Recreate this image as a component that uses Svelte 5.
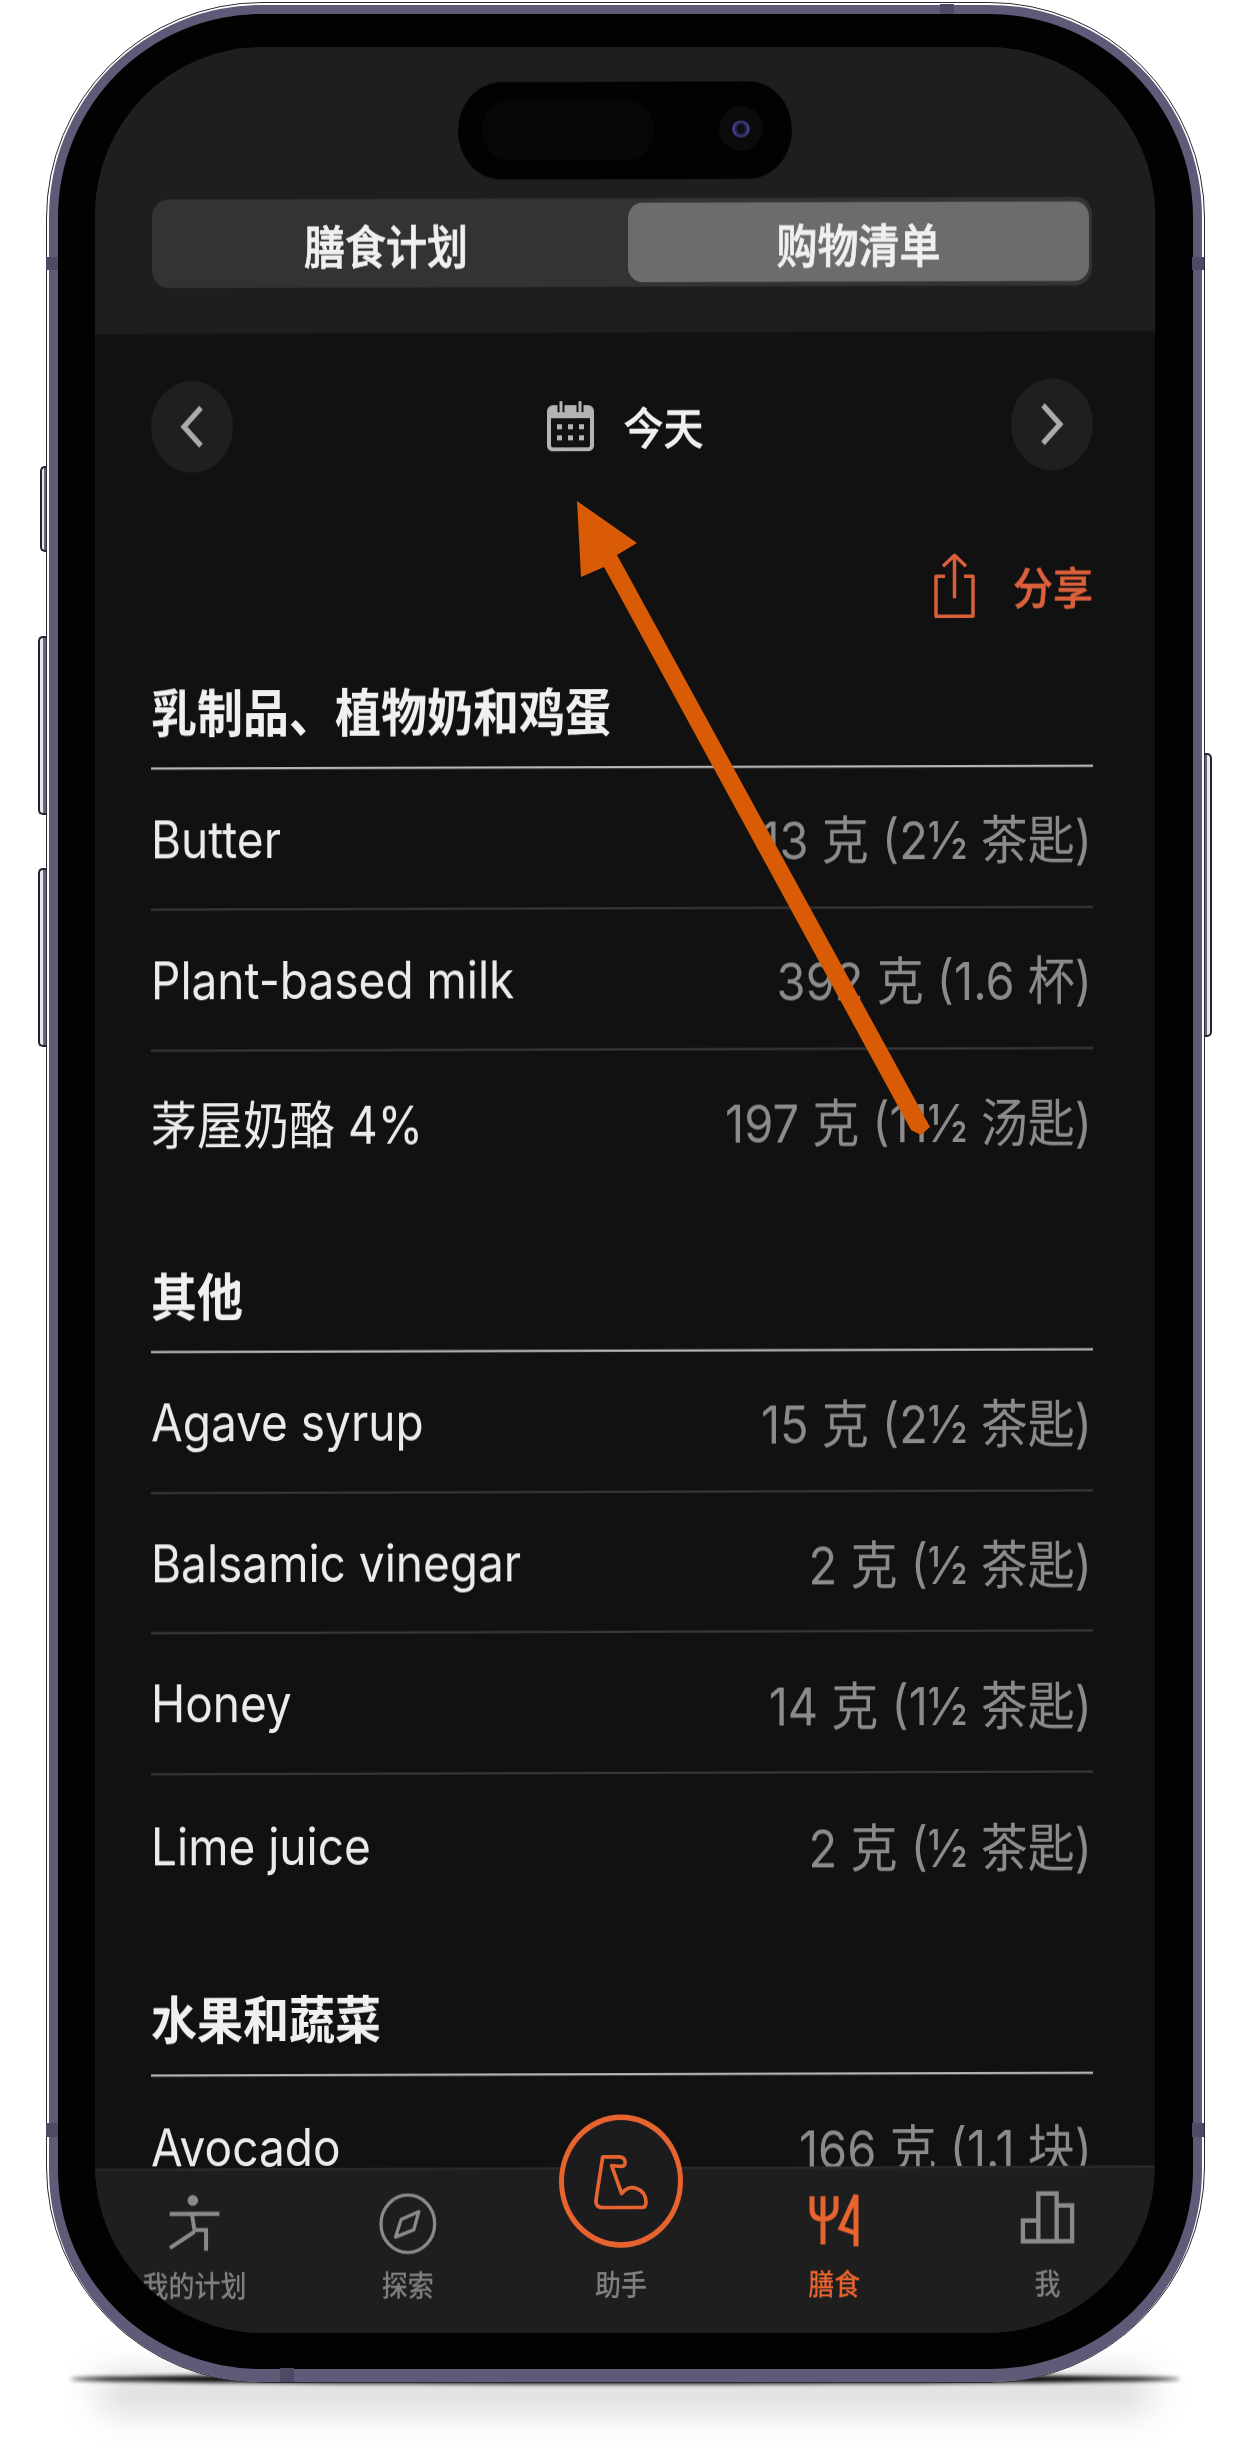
<script lang="ts">
	type Row = { name: string; amount: string };
	type Section = { title: string; rows: Row[] };

	const sections: Section[] = [
		{
			title: '乳制品、植物奶和鸡蛋',
			rows: [
				{ name: 'Butter', amount: '13 克 (2½ 茶匙)' },
				{ name: 'Plant-based milk', amount: '392 克 (1.6 杯)' },
				{ name: '茅屋奶酪 4%', amount: '197 克 (11½ 汤匙)' }
			]
		},
		{
			title: '其他',
			rows: [
				{ name: 'Agave syrup', amount: '15 克 (2½ 茶匙)' },
				{ name: 'Balsamic vinegar', amount: '2 克 (½ 茶匙)' },
				{ name: 'Honey', amount: '14 克 (1½ 茶匙)' },
				{ name: 'Lime juice', amount: '2 克 (½ 茶匙)' }
			]
		},
		{
			title: '水果和蔬菜',
			rows: [{ name: 'Avocado', amount: '166 克 (1.1 块)' }]
		}
	];

	let tab = $state('shopping');
</script>

<div class="page">
	<div class="ground-soft"></div>
	<div class="ground-hard"></div>

	<span class="side-btn left mute"></span>
	<span class="side-btn left vol-up"></span>
	<span class="side-btn left vol-down"></span>
	<span class="side-btn right power"></span>

	<div class="phone">
		<div class="frame">
			<div class="screen">
				<div class="stage">
					<header class="top">
						<div class="island">
							<span class="island-pill"></span>
							<span class="camera"><span class="lens"></span></span>
						</div>
						<div class="segment">
							<button class:active={tab === 'plan'} onclick={() => (tab = 'plan')}>膳食计划</button>
							<button class:active={tab === 'shopping'} onclick={() => (tab = 'shopping')}>购物清单</button>
						</div>
					</header>

					<main class="content">
						<nav class="date-nav">
							<button class="round" aria-label="上一天">
								<svg width="24" height="38" viewBox="0 0 24 38" fill="none" stroke="#ababab" stroke-width="5"><path d="M21 2 4 19l17 17" /></svg>
							</button>
							<div class="date">
								<svg width="47" height="45" viewBox="0 0 47 50" preserveAspectRatio="none">
									<rect x="2" y="6" width="43" height="42" rx="4" fill="none" stroke="#b4b4b4" stroke-width="4" />
									<rect x="2" y="6" width="43" height="11" fill="#b4b4b4" />
									<path d="M14 1v10M33 1v10" stroke="#111" stroke-width="7" />
									<path d="M14 1v9M33 1v9" stroke="#b4b4b4" stroke-width="3" stroke-linecap="round" />
									<g fill="#b4b4b4">
										<rect x="10" y="23" width="5" height="5" /><rect x="21" y="23" width="5" height="5" /><rect x="32" y="23" width="5" height="5" />
										<rect x="10" y="34" width="5" height="5" /><rect x="21" y="34" width="5" height="5" /><rect x="32" y="34" width="5" height="5" />
									</g>
								</svg>
								<span>今天</span>
							</div>
							<button class="round" aria-label="下一天">
								<svg width="24" height="38" viewBox="0 0 24 38" fill="none" stroke="#ababab" stroke-width="5"><path d="M3 2l17 17L3 36" /></svg>
							</button>
						</nav>

						<div class="share">
							<svg width="43" height="59" viewBox="0 0 43 66" preserveAspectRatio="none" fill="none" stroke="#d9603a" stroke-width="3.5" stroke-linejoin="round">
								<path d="M12 24H3v40h37V24h-9" />
								<path d="M21.5 46V3M10 14 21.5 3 33 14" />
							</svg>
							<span>分享</span>
						</div>

						{#each sections as section (section.title)}
							<section>
								<h2>{section.title}</h2>
								{#each section.rows as row (row.name)}
									<div class="row">
										<span class="name">{row.name}</span>
										<span class="amount">{row.amount}</span>
									</div>
								{/each}
							</section>
						{/each}
					</main>

					<footer class="tabbar">
						<div class="tab">
							<svg width="53" height="54" viewBox="60 40 160 180" preserveAspectRatio="none" fill="none" stroke="#8a8a8a" stroke-width="12">
								<circle cx="135" cy="62" r="16" fill="#8a8a8a" stroke="none" />
								<path d="M65 102H215M132 102l8 48h35v62M140 155 66 203" />
							</svg>
							<span>我的计划</span>
						</div>
						<div class="tab">
							<svg width="58" height="56" viewBox="690 30 175 190" preserveAspectRatio="none" fill="none" stroke="#8a8a8a" stroke-width="10">
								<ellipse cx="777" cy="125" rx="81" ry="87" />
								<path d="M810 88 757 112 740 165 795 143Z" stroke-linejoin="round" />
							</svg>
							<span>探索</span>
						</div>
						<div class="tab">
							<div class="fab">
								<svg width="60" height="52" viewBox="130 145 180 175" preserveAspectRatio="none" fill="none" stroke="#e8642f" stroke-width="11" stroke-linejoin="round">
									<path d="M165 158H215Q235 160 232 178 230 188 215 186L192 184 222 268Q240 245 265 252 295 262 295 295 295 310 282 310H165Q140 310 146 280Z" />
								</svg>
							</div>
							<span>助手</span>
						</div>
						<div class="tab on">
							<svg width="52" height="51" viewBox="182 110 52 57" preserveAspectRatio="none" fill="none" stroke="#e8642f" stroke-width="5">
								<path d="M186 115v13q0 10 11 10t13-10v-13M197 115v48M230 165V114l-15 33 15 5" />
							</svg>
							<span>膳食</span>
						</div>
						<div class="tab">
							<svg width="55" height="48" viewBox="395 112 57 54" preserveAspectRatio="none" fill="none" stroke="#8a8a8a" stroke-width="4.5">
								<path d="M398 163V142H414V115H433V127H449V163ZM414 142V163M433 127V163" />
							</svg>
							<span>我</span>
						</div>
					</footer>
				</div>
			</div>
		</div>
	</div>

	<span class="band" style="left:46px;top:257px;width:12px;height:13px"></span>
	<span class="band" style="left:1192px;top:257px;width:12px;height:13px"></span>
	<span class="band" style="left:46px;top:2123px;width:12px;height:14px"></span>
	<span class="band" style="left:1192px;top:2123px;width:12px;height:14px"></span>
	<span class="band" style="left:940px;top:4px;width:14px;height:10px"></span>
	<span class="band" style="left:280px;top:2368px;width:14px;height:14px"></span>

	<svg class="arrow" width="1253" height="2464" viewBox="0 0 1253 2464">
		<polygon points="577,501 637,543 617,555 930,1127 921,1135 911,1130 604,567 581,577" fill="#d95b06" />
	</svg>
</div>

<style>
	:global(body) {
		margin: 0;
		background: #fff;
	}

	.page {
		position: relative;
		width: 1253px;
		height: 2464px;
		overflow: hidden;
		padding: 2px 0 0 46px;
		box-sizing: border-box;
		font-family: Inter, 'Noto Sans CJK SC', sans-serif;
	}

	.ground-soft {
		position: absolute;
		left: 100px;
		top: 2376px;
		width: 1050px;
		height: 34px;
		background: rgba(0, 0, 0, 0.17);
		filter: blur(18px);
	}

	.ground-hard {
		position: absolute;
		left: 70px;
		top: 2374px;
		width: 1110px;
		height: 10px;
		border-radius: 50%;
		background: #000;
		filter: blur(2px);
	}

	.side-btn {
		position: absolute;
		box-sizing: border-box;
		border: 2px solid #25242b;
	}

	.side-btn.left {
		border-right: none;
		border-radius: 5px 0 0 5px;
		background: linear-gradient(90deg, #e9e6f2 0 45%, #6a667f 45%);
	}

	.side-btn.right {
		border-left: none;
		border-radius: 0 5px 5px 0;
		background: linear-gradient(90deg, #6a667f 0 50%, #e9e6f2 50%);
	}

	.mute {
		left: 40px;
		top: 466px;
		width: 7px;
		height: 86px;
	}

	.vol-up {
		left: 38px;
		top: 636px;
		width: 9px;
		height: 179px;
	}

	.vol-down {
		left: 38px;
		top: 868px;
		width: 9px;
		height: 179px;
	}

	.power {
		left: 1204px;
		top: 753px;
		width: 8px;
		height: 284px;
	}

	.phone {
		position: relative;
		box-sizing: border-box;
		width: 1159px;
		height: 2381px;
		padding: 2px 2px 0;
		border: 1px solid #2c2b33;
		border-radius: 216px;
		background: #fff;
	}

	.frame {
		box-sizing: border-box;
		height: 100%;
		padding: 33px 37px 35px;
		border: 9px solid #5f5a78;
		border-bottom-width: 13px;
		border-radius: 212px;
		background: #020202;
	}

	.screen {
		width: 1060px;
		height: 2286px;
		overflow: hidden;
		border-radius: 168px;
		background: #1e1e1e;
	}

	/* the capture is stretched 12% vertically and tilted a touch */
	.stage {
		position: relative;
		height: 2041px;
		background: #111;
		transform: skewY(-0.17deg) scaleY(1.12);
		transform-origin: top center;
		filter: blur(0.5px);
	}

	.top {
		position: relative;
		box-sizing: border-box;
		height: 255px;
		padding: 135px 63px 0 57px;
		background: #1e1e1e;
	}

	.island {
		position: absolute;
		left: 363px;
		top: 31px;
		width: 334px;
		height: 87px;
		border-radius: 44px;
		background: #020202;
	}

	.island-pill {
		position: absolute;
		left: 24px;
		top: 16px;
		width: 172px;
		height: 54px;
		border-radius: 27px;
		background: #070707;
	}

	.camera {
		position: absolute;
		left: 261px;
		top: 22px;
		display: flex;
		align-items: center;
		justify-content: center;
		width: 44px;
		height: 40px;
		border-radius: 50%;
		background: #0b0b0e;
	}

	.lens {
		width: 18px;
		height: 15px;
		border-radius: 50%;
		background: radial-gradient(circle, #0d0d18 30%, #4a4496 65%, #1b1b2c 90%);
	}

	.segment {
		display: flex;
		box-sizing: border-box;
		height: 79px;
		padding: 4px 3px 4px 0;
		border-radius: 16px;
		background: #333335;
	}

	.segment button {
		padding: 0;
		border: none;
		border-radius: 14px;
		background: transparent;
		color: #f0f0f0;
		font: 500 41px Inter, 'Noto Sans CJK SC', sans-serif;
		-webkit-text-stroke: 0.7px #f0f0f0;
	}

	.segment button:first-child {
		flex: 0 0 476px;
		padding-right: 8px;
	}

	.segment button:last-child {
		flex: 1;
	}

	.segment button.active {
		background: #6c6c6c;
	}

	.content {
		padding: 0 62px 0 56px;
	}

	.date-nav {
		display: flex;
		align-items: center;
		justify-content: space-between;
		padding-top: 42px;
	}

	.round {
		display: flex;
		align-items: center;
		justify-content: center;
		width: 82px;
		height: 82px;
		padding: 0;
		border: none;
		border-radius: 50%;
		background: #1f1f1f;
	}

	.date {
		display: flex;
		align-items: center;
		gap: 30px;
		margin-left: 6px;
		color: #f0f0f0;
		font-size: 40px;
		font-weight: 500;
		-webkit-text-stroke: 0.4px #f0f0f0;
	}

	.share {
		display: flex;
		align-items: center;
		justify-content: flex-end;
		gap: 37px;
		height: 59px;
		margin-top: 73px;
		color: #d9603a;
		font-size: 40px;
		font-weight: 500;
		-webkit-text-stroke: 0.5px #d9603a;
	}

	section {
		margin-top: 63px;
	}

	.share + section {
		margin-top: 53px;
	}

	h2 {
		height: 60px;
		margin: 0;
		padding-bottom: 18px;
		border-bottom: 2px solid #b9b9b9;
		color: #f0f0f0;
		font-size: 46px;
		font-weight: 700;
		line-height: 60px;
	}

	.row {
		display: flex;
		align-items: center;
		justify-content: space-between;
		box-sizing: border-box;
		height: 125.9px;
		padding-right: 1px;
		border-bottom: 2px solid #383838;
		font-size: 46px;
	}

	.row:last-child {
		border-bottom: none;
	}

	.name {
		color: #ebebeb;
	}

	.amount {
		color: #8b8b8b;
		font-size: 47px;
	}

	.tabbar {
		position: absolute;
		left: -7px;
		top: 1893px;
		display: grid;
		grid-template-columns: repeat(5, 1fr);
		box-sizing: border-box;
		width: 1066px;
		height: 170px;
		padding-top: 20px;
		border-top: 2px solid #2a2a2a;
		background: #1e1e1e;
	}

	.tab {
		position: relative;
		display: flex;
		flex-direction: column;
		align-items: center;
		color: #7f7f7f;
		font-size: 26px;
		font-weight: 500;
		line-height: 30px;
	}

	.tab svg {
		display: block;
	}

	.tab > span:last-child {
		position: absolute;
		top: 69px;
	}

	.tab.on {
		color: #e8642f;
	}

	.fab {
		position: absolute;
		left: 45px;
		top: -69px;
		display: flex;
		align-items: center;
		justify-content: center;
		box-sizing: border-box;
		width: 124px;
		height: 119px;
		border: 5px solid #e8642f;
		border-radius: 50%;
		background: #1c1c1f;
	}

	.band {
		position: absolute;
		background: #4e4a66;
	}

	.arrow {
		position: absolute;
		left: 0;
		top: 0;
		pointer-events: none;
	}
</style>
